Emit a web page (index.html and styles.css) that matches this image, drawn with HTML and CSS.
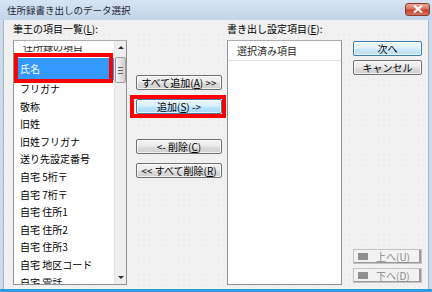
FILE: index.html
```html
<!DOCTYPE html>
<html lang="ja">
<head>
    <meta charset="UTF-8">
    <title>住所録書き出しのデータ選択</title>
    <link rel="stylesheet" href="styles.css">
</head>
<body>
    <div class="window">
        <div class="titlebar">
            <span class="title">住所録書き出しのデータ選択</span>
            <div class="close-btn">
                <svg viewBox="0 0 12 8" width="12" height="8">
                    <path d="M2 0.5 L10 7.5 M10 0.5 L2 7.5" stroke="#fff" stroke-width="2.2"/>
                </svg>
            </div>
        </div>

        <div class="client">
            <div class="col col-source">
                <div class="label">筆王の項目一覧(<u>L</u>):</div>
                <div class="listbox">
                    <div class="list-items">
                        <div class="group-head"><span>住所録の項目</span></div>
                        <div class="item selected">氏名</div>
                        <div class="item">フリガナ</div>
                        <div class="item">敬称</div>
                        <div class="item">旧姓</div>
                        <div class="item">旧姓フリガナ</div>
                        <div class="item">送り先設定番号</div>
                        <div class="item">自宅 5桁〒</div>
                        <div class="item">自宅 7桁〒</div>
                        <div class="item">自宅 住所1</div>
                        <div class="item">自宅 住所2</div>
                        <div class="item">自宅 住所3</div>
                        <div class="item">自宅 地区コード</div>
                        <div class="item">自宅 電話</div>
                    </div>
                    <div class="scrollbar">
                        <div class="arrow arrow-up"></div>
                        <div class="thumb"><span></span><span></span><span></span></div>
                        <div class="track"></div>
                        <div class="arrow arrow-down"></div>
                    </div>
                    <div class="callout callout-item"></div>
                </div>
            </div>

            <div class="col col-move">
                <div class="btn"><span>すべて追加(<u>A</u>) &gt;&gt;</span></div>
                <div class="btn-wrap">
                    <div class="btn btn-hot"><span>追加(<u>S</u>) -&gt;</span></div>
                    <div class="callout callout-btn"></div>
                </div>
                <div class="btn btn-gap"><span>&lt;- 削除(<u>C</u>)</span></div>
                <div class="btn"><span>&lt;&lt; すべて削除(<u>R</u>)</span></div>
            </div>

            <div class="col col-target">
                <div class="label">書き出し設定項目(<u>E</u>):</div>
                <div class="listbox">
                    <div class="list-head">選択済み項目</div>
                </div>
            </div>

            <div class="col col-actions">
                <div class="btn btn-default"><span>次へ</span></div>
                <div class="btn"><span>キャンセル</span></div>
                <div class="btn btn-disabled btn-up"><i class="glyph"></i><span>上へ(<u>U</u>)</span></div>
                <div class="btn btn-disabled"><i class="glyph"></i><span>下へ(<u>D</u>)</span></div>
            </div>
        </div>
    </div>
</body>
</html>
```

FILE: styles.css
```css
:root {
    --face: #f0f0f0;
    --frame: #cddcec;
    --select: #3399ff;
    --callout: #ff0000;
    --list-border: #8e9196;
}

* {
    margin: 0;
    padding: 0;
    box-sizing: border-box;
    font-family: "Noto Sans CJK JP", "Noto Sans", sans-serif;
}

body {
    width: 432px;
    height: 292px;
    overflow: hidden;
    font-size: 10px;
    color: #000;
}

u {
    text-decoration: underline;
    text-underline-offset: 1px;
}

.window {
    width: 432px;
    height: 292px;
    display: flex;
    flex-direction: column;
    background: var(--frame);
    border-bottom: 3px solid #2a9fd8;
}

.titlebar {
    height: 20px;
    display: flex;
    align-items: center;
    justify-content: space-between;
    padding: 0 2px 0 7px;
    background: linear-gradient(#d6e3f2, #c4d5e9);
}

.title {
    font-size: 9.5px;
    color: #1c2634;
    line-height: 12px;
}

.close-btn {
    width: 25px;
    height: 13px;
    margin-top: -2px;
    display: flex;
    align-items: center;
    justify-content: center;
    border: 1px solid #8a3b2c;
    border-radius: 3px;
    background: linear-gradient(#eaa795 0%, #d9715c 45%, #c2432b 55%, #d8735b 100%);
}

.client {
    flex: 1;
    display: flex;
    margin: 0 3px;
    padding: 2px 0 0 9px;
    border-left: 1px solid #aab4c0;
    border-right: 1px solid #aab4c0;
    background-color: var(--face);
    background-image: radial-gradient(#fbfbfb 0.6px, transparent 0.9px);
    background-size: 5px 5px;
}

.label {
    height: 18px;
    line-height: 14px;
    white-space: nowrap;
}

.listbox {
    position: relative;
    height: 245px;
    display: flex;
    background: #fff;
    border: 1px solid var(--list-border);
    border-top-color: #abadb3;
}

/* left column */
.col-source {
    width: 114px;
}

.list-items {
    flex: 1;
    overflow: hidden;
}

.group-head {
    height: 11px;
    margin-top: 5px;
    overflow: hidden;
}

.group-head span {
    display: block;
    margin-top: -5px;
    padding-left: 9px;
    line-height: 11px;
    color: #1e1e1e;
}

.item {
    height: 17.6px;
    line-height: 17.6px;
    padding-left: 6px;
    white-space: nowrap;
}

.item.selected {
    height: 22px;
    line-height: 22px;
    margin-top: 1px;
    background: var(--select);
    color: #fff;
}

.scrollbar {
    width: 12px;
    display: flex;
    flex-direction: column;
    align-items: center;
    background: #eeeeee;
    border-left: 1px solid #e3e3e3;
}

.arrow {
    width: 0;
    height: 0;
    border-left: 3px solid transparent;
    border-right: 3px solid transparent;
}

.arrow-up {
    margin-top: 5px;
    border-bottom: 3px solid #303030;
}

.arrow-down {
    margin-bottom: 5px;
    border-top: 3px solid #303030;
}

.thumb {
    width: 11px;
    height: 26px;
    margin-top: 8px;
    display: flex;
    flex-direction: column;
    align-items: center;
    justify-content: center;
    gap: 2px;
    border: 1px solid #9d9d9d;
    border-radius: 2px;
    background: linear-gradient(90deg, #f4f4f4, #e2e2e2 50%, #d0d0d0);
}

.thumb span {
    width: 5px;
    height: 1px;
    background: #5f5f5f;
}

.track {
    flex: 1;
}

.callout {
    position: absolute;
    border: 4px solid var(--callout);
    pointer-events: none;
}

.callout-item {
    left: 0;
    top: 12px;
    width: 99px;
    height: 30px;
}

/* move buttons */
.col-move {
    width: 100px;
    padding: 53px 0 0 9px;
    display: flex;
    flex-direction: column;
    align-items: flex-start;
    gap: 9px;
}

.btn {
    width: 86px;
    height: 15px;
    display: flex;
    align-items: center;
    justify-content: center;
    white-space: nowrap;
    line-height: 13px;
    border: 1px solid #707070;
    border-radius: 2px;
    background: linear-gradient(#f2f2f2 0%, #ebebeb 48%, #dddddd 52%, #cfcfcf 100%);
    box-shadow: inset 0 0 0 1px rgba(255,255,255,0.7);
}

.btn-wrap {
    position: relative;
    width: 86px;
}

.btn-hot {
    border-color: #3c7fb1;
    background: linear-gradient(#eaf6fd 0%, #d9f0fc 48%, #bee6fd 52%, #a7d9f5 100%);
}

.callout-btn {
    top: -4px;
    left: -6px;
    right: -4px;
    bottom: -4px;
}

.btn-gap {
    margin-top: 16px;
}

/* target list */
.col-target {
    width: 115px;
}

.list-head {
    width: 100%;
    height: 20px;
    line-height: 20px;
    padding-left: 9px;
    border-bottom: 1px solid #e2e2e2;
    color: #1e1e1e;
}

/* dialog actions */
.col-actions {
    padding: 19px 0 0 11px;
    display: flex;
    flex-direction: column;
    gap: 4px;
}

.col-actions .btn {
    width: 69px;
}

.btn-default {
    border-color: #3c7fb1;
    background: linear-gradient(#eef7fd 0%, #e1f1fb 48%, #cde9f9 52%, #bcdff4 100%);
}

.btn-up {
    margin-top: 170px;
}

.btn-disabled {
    gap: 8px;
    justify-content: flex-start;
    padding-left: 4px;
    color: #8a8a8a;
    border-color: #c2c2c2;
    border-radius: 0;
    background: #f2f2f2;
    box-shadow: inset -2px -1px 0 #9a9a9a;
}

.glyph {
    width: 10px;
    height: 7px;
    flex: none;
    background: #8e8e8e;
}
```
